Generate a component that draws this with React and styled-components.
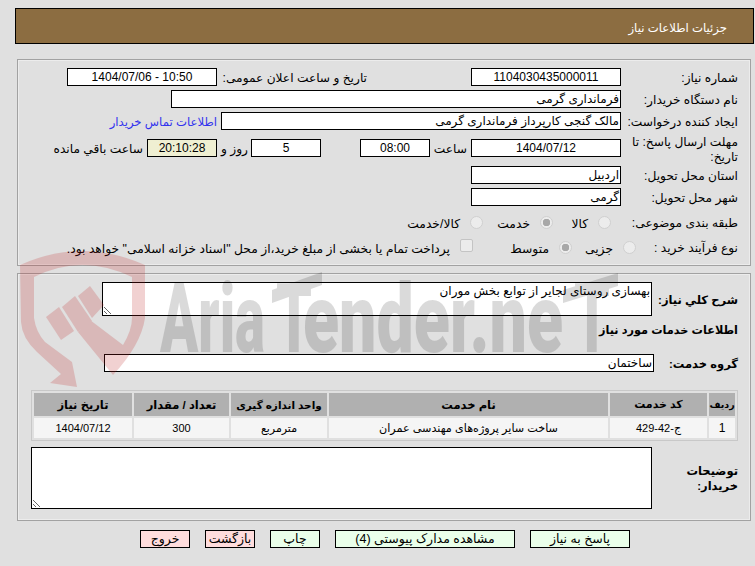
import React from 'react';
import styled, { createGlobalStyle } from 'styled-components';

const GlobalStyle = createGlobalStyle`
  html, body {
    margin: 0;
    padding: 0;
    background: #e0e0e0;
  }
  body {
    font-family: "Liberation Sans", "DejaVu Sans", sans-serif;
    font-size: 12.2px;
    color: #000;
  }
`;

const columns = [
  { title: 'ردیف', width: 26, size: 9.5 },
  { title: 'کد خدمت', width: 97, size: 11 },
  { title: 'نام خدمت', width: 279, size: 11.5 },
  { title: 'واحد اندازه گیری', width: 96, size: 10.5 },
  { title: 'تعداد / مقدار', width: 95, size: 11.5 },
  { title: 'تاریخ نیاز', width: 98, size: 11.5 },
];

const row = [
  { value: '1', size: 12 },
  { value: 'ج-42-429', size: 11 },
  { value: 'ساخت سایر پروژه‌های مهندسی عمران', size: 11.2 },
  { value: 'مترمربع', size: 11 },
  { value: '300', size: 11 },
  { value: '1404/07/12', size: 11 },
];

const buttons = [
  { text: 'پاسخ به نیاز', width: 100 },
  { text: 'مشاهده مدارک پیوستی (4)', width: 180 },
  { text: 'چاپ', width: 50 },
  { text: 'بازگشت', width: 50, danger: true },
  { text: 'خروج', width: 50, danger: true },
];

const Watermark = () => (
  <WatermarkLayer viewBox="0 0 755 566" aria-hidden="true">
    <g fill="#be1e1e" opacity="0.2">
      <path d="M20 265 Q82 237 145 265 L145 318 Q141 345 113 375 L78 332 L90 320 L123 345 Q132 330 132 318 L132 277 Q82 253 34 277 L34 318 Q36 332 45 342 L72 362 L77 387 L50 383 L61 374 L37 352 Q22 338 21 322 Z" />
      <path d="M90 286 L104 305 L92 318 L78 296 Z" />
      <path d="M75 296 L92 321 L78 332 L62 307 Z" />
      <path d="M59 307 L74 331 L61 340 L46 317 Z" />
    </g>
    <g fill="#000" opacity="0.14">
      <WatermarkText x="160" y="352" textLength="105" lengthAdjust="spacingAndGlyphs">Aria</WatermarkText>
      <WatermarkText x="276" y="352" textLength="36" lengthAdjust="spacingAndGlyphs">T</WatermarkText>
      <WatermarkText x="303" y="352" textLength="260" lengthAdjust="spacingAndGlyphs">ender.ne</WatermarkText>
      <WatermarkText x="574" y="352" textLength="36" lengthAdjust="spacingAndGlyphs">T</WatermarkText>
      <path d="M272 290 L322 272 L322 285 L272 303 Z" />
      <path d="M563 290 L618 273 L618 286 L563 303 Z" />
    </g>
  </WatermarkLayer>
);

const App = () => (
  <Page dir="rtl">
    <GlobalStyle />
    <Header>جزئیات اطلاعات نیاز</Header>

    <Panel $height={207} $top={15}>
      <Row>
        <Label>شماره نیاز:</Label>
        <Field $w={150} $center>1104030435000011</Field>
        <Label $w={150} $mr={104}>تاریخ و ساعت اعلان عمومی:</Label>
        <Field $w={150} $center dir="ltr">1404/07/06 - 10:50</Field>
      </Row>
      <Row $mt={4}>
        <Label>نام دستگاه خریدار:</Label>
        <Field $w={450}>فرمانداری گرمی</Field>
      </Row>
      <Row $mt={4}>
        <Label>ایجاد کننده درخواست:</Label>
        <Field $w={400}>مالک گنجی کارپرداز فرمانداری گرمی</Field>
        <ContactLink href="#">اطلاعات تماس خریدار</ContactLink>
      </Row>
      <Row $mt={9}>
        <Label>مهلت ارسال پاسخ: تا تاریخ:</Label>
        <Field $w={150} $center>1404/07/12</Field>
        <Label $w={37} $mr={4}>ساعت</Label>
        <Field $w={70} $center>08:00</Field>
        <Field $w={70} $center $mr={39}>5</Field>
        <Label $w={31} $mr={3}>روز و</Label>
        <Field $w={70} $center $bg="#efefd2">20:10:28</Field>
        <Label $w={94} $mr={4}>ساعت باقي مانده</Label>
      </Row>
      <Row $mt={9}>
        <Label>استان محل تحویل:</Label>
        <Field $w={150}>اردبیل</Field>
      </Row>
      <Row $mt={4}>
        <Label>شهر محل تحویل:</Label>
        <Field $w={150}>گرمی</Field>
      </Row>
      <Row $mt={7}>
        <Label $w={127}>طبقه بندی موضوعی:</Label>
        <Option $w={58}><Radio /><OptionText>کالا</OptionText></Option>
        <Option $w={70}><Radio $checked /><OptionText>خدمت</OptionText></Option>
        <Option $w={80}><Radio /><OptionText>کالا/خدمت</OptionText></Option>
      </Row>
      <Row $mt={7}>
        <Label $w={102}>نوع فرآیند خرید :</Label>
        <Option $w={64}><Radio /><OptionText>جزیی</OptionText></Option>
        <Option $w={99}><Radio $checked /><OptionText>متوسط</OptionText></Option>
        <Option>
          <CheckBox />
          <OptionText>پرداخت تمام یا بخشی از مبلغ خرید،از محل "اسناد خزانه اسلامی" خواهد بود.</OptionText>
        </Option>
      </Row>
    </Panel>

    <Panel $height={248} $top={7}>
      <Row $h={34}>
        <StrongLabel $w={86}>شرح كلي نياز:</StrongLabel>
        <Area $w={550} $h={34} readOnly value="بهسازی روستای لجایر از توابع بخش موران" />
      </Row>
      <SectionTitle>اطلاعات خدمات مورد نیاز</SectionTitle>
      <Row>
        <StrongLabel $w={84}>گروه خدمت:</StrongLabel>
        <Field $w={550}>ساختمان</Field>
      </Row>
      <ServiceTable>
        <colgroup>
          {columns.map((c) => <col key={c.title} width={c.width} />)}
        </colgroup>
        <thead>
          <tr>
            {columns.map((c) => <HeadCell key={c.title} $size={c.size}>{c.title}</HeadCell>)}
          </tr>
        </thead>
        <tbody>
          <tr>
            {row.map((c) => <BodyCell key={c.value} $size={c.size}>{c.value}</BodyCell>)}
          </tr>
        </tbody>
      </ServiceTable>
      <Row $h={62} $mt={6} $top>
        <StrongLabel $w={86} $pt={17}>توضیحات خریدار:</StrongLabel>
        <Area $w={621} $h={62} readOnly value="" />
      </Row>
    </Panel>

    <ButtonBar>
      {buttons.map((b) => (
        <ActionButton key={b.text} type="button" $w={b.width} $danger={b.danger}>
          {b.text}
        </ActionButton>
      ))}
    </ButtonBar>
    <Watermark />
  </Page>
);

export default App;

const Page = styled.div`
  position: relative;
  width: 755px;
  height: 566px;
  overflow: hidden;
  box-sizing: border-box;
  padding: 8px 1px 0 15px;
`;

const WatermarkLayer = styled.svg`
  position: absolute;
  left: 0;
  top: 0;
  width: 755px;
  height: 566px;
  pointer-events: none;
`;

const WatermarkText = styled.text`
  font-family: Roboto, sans-serif;
  font-size: 97px;
  font-weight: 900;
  direction: ltr;
`;

const Header = styled.div`
  box-sizing: border-box;
  height: 36px;
  padding-right: 26px;
  line-height: 37px;
  background: #8c6d41;
  border: 1px solid #000;
  color: #fff;
  font-size: 11.7px;
`;

const Panel = styled.section`
  box-sizing: border-box;
  height: ${(p) => p.$height}px;
  margin: ${(p) => p.$top}px 3px 0 2px;
  padding: 8px 12px 0 0;
  border: 1px solid #a2a2a2;
  box-shadow: inset 0 0 0 1px #ececec;
`;

const Row = styled.div`
  display: flex;
  align-items: ${(p) => (p.$top ? 'flex-start' : 'center')};
  height: ${(p) => p.$h || 18}px;
  margin-top: ${(p) => p.$mt || 0}px;
`;

const Label = styled.label`
  flex: none;
  box-sizing: border-box;
  width: ${(p) => p.$w || 117}px;
  margin-right: ${(p) => p.$mr || 0}px;
  padding-top: 3px;
  line-height: 15px;
`;

const StrongLabel = styled(Label)`
  font-size: 11.5px;
  font-weight: bold;
  padding-top: ${(p) => p.$pt || 3}px;
`;

const Field = styled.div`
  flex: none;
  box-sizing: border-box;
  width: ${(p) => p.$w}px;
  height: 18px;
  margin-right: ${(p) => p.$mr || 0}px;
  padding: 0 1px;
  font-size: 12px;
  line-height: 16px;
  text-align: ${(p) => (p.$center ? 'center' : 'right')};
  background: ${(p) => p.$bg || '#fff'};
  border: 1px solid #000;
  white-space: nowrap;
`;

const Area = styled.textarea`
  flex: none;
  display: block;
  box-sizing: border-box;
  width: ${(p) => p.$w}px;
  height: ${(p) => p.$h}px;
  margin: 0;
  padding: 1px;
  background: #fff;
  border: 1px solid #000;
  border-radius: 0;
  outline: none;
  font-family: inherit;
  font-size: 12px;
  color: #000;
`;

const ContactLink = styled.a`
  margin-right: 4px;
  padding-top: 1px;
  font-size: 11.7px;
  color: #3333ee;
  text-decoration: none;
  white-space: nowrap;
`;

const Option = styled.span`
  flex: none;
  display: flex;
  align-items: center;
  gap: 10px;
  box-sizing: border-box;
  width: ${(p) => (p.$w ? `${p.$w}px` : 'auto')};
  white-space: nowrap;
`;

const OptionText = styled.span`
  padding-top: 3px;
  font-size: 12.3px;
`;

const Radio = styled.span`
  flex: none;
  box-sizing: border-box;
  width: 13px;
  height: 13px;
  border: 1px solid #d0d0d0;
  border-radius: 50%;
  background: ${(p) => (p.$checked ? 'radial-gradient(circle, #a8a8a8 0 3.5px, #ececec 4px)' : '#ececec')};
`;

const CheckBox = styled.span`
  flex: none;
  box-sizing: border-box;
  width: 13px;
  height: 13px;
  margin-top: -3px;
  border: 1px solid #c4c4c4;
  border-radius: 2px;
  background: #ececec;
`;

const SectionTitle = styled.h3`
  margin: 0;
  height: 38px;
  line-height: 28px;
  font-size: 11.3px;
  font-weight: bold;
`;

const ServiceTable = styled.table`
  table-layout: fixed;
  width: 707px;
  height: 51px;
  margin: 18px 0 0 0;
  border-collapse: separate;
  border-spacing: 2px;
  border: 1px solid #c8c8c8;
  background: #e0e0e0;
`;

const HeadCell = styled.th`
  height: 23px;
  padding: 0;
  background: #b0b0b0;
  font-size: ${(p) => p.$size}px;
  font-weight: bold;
  text-align: center;
  white-space: nowrap;
`;

const BodyCell = styled.td`
  height: 20px;
  padding: 0;
  background: #f5f5f5;
  font-size: ${(p) => p.$size}px;
  text-align: center;
  white-space: nowrap;
`;

const ButtonBar = styled.div`
  display: flex;
  gap: 15px;
  margin: 9px 124px 0 0;
`;

const ActionButton = styled.button`
  box-sizing: border-box;
  width: ${(p) => p.$w}px;
  height: 18px;
  padding: 0;
  background: ${(p) => (p.$danger ? '#ffdddd' : '#eaffea')};
  border: 1px solid #000;
  border-radius: 0;
  font-family: inherit;
  font-size: 12.5px;
  line-height: 16px;
  color: #000;
`;
